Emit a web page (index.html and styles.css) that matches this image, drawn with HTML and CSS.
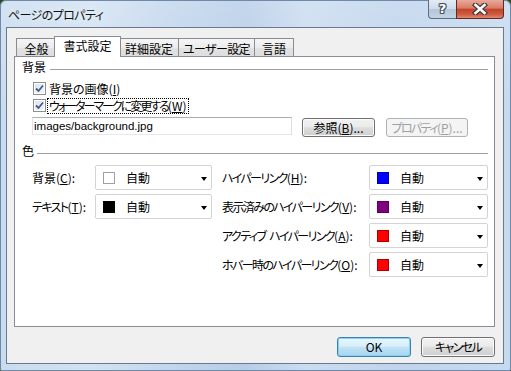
FILE: index.html
```html
<!DOCTYPE html>
<html lang="ja">
<head>
<meta charset="utf-8">
<title>ページのプロパティ</title>
<link rel="stylesheet" href="styles.css">
</head>
<body>
<div class="window">
  <div class="titlebar">
    <span class="title">ページのプロパティ</span>
    <div class="caption-btns">
      <div class="cap help"><span class="qmark">?</span></div>
      <div class="cap close">
        <svg width="16" height="12" viewBox="0 0 16 12"><path d="M3.5 2 L12.5 10 M12.5 2 L3.5 10" stroke="#3b3b3b" stroke-width="5" stroke-linecap="square"/><path d="M3.5 2 L12.5 10 M12.5 2 L3.5 10" stroke="#ffffff" stroke-width="2.6" stroke-linecap="square"/></svg>
      </div>
    </div>
  </div>
  <div class="client">
    <div class="tabs">
      <div class="tab t1">全般</div>
      <div class="tab active t2">書式設定</div>
      <div class="tab t3">詳細設定</div>
      <div class="tab t4 tight-tab">ユーザー設定</div>
      <div class="tab t5">言語</div>
    </div>
    <div class="panel">
      <div class="group-head"><span>背景</span><div class="rule"></div></div>
      <div class="check-row">
        <span class="checkbox"><svg width="9" height="9" viewBox="0 0 9 9"><path d="M1 4.5 L3.5 7 L8 1.5" fill="none" stroke="#3d5a99" stroke-width="1.8"/></svg></span>
        <span class="check-label">背景の画像(<u>I</u>)</span>
      </div>
      <div class="check-row">
        <span class="checkbox"><svg width="9" height="9" viewBox="0 0 9 9"><path d="M1 4.5 L3.5 7 L8 1.5" fill="none" stroke="#3d5a99" stroke-width="1.8"/></svg></span>
        <span class="check-label focus"><span class="tighter">ウォーターマークに変更する</span>(<u>W</u>)</span>
      </div>
      <div class="path-row">
        <div class="textbox">images/background.jpg</div>
        <div class="btn browse">参照(<u>B</u>)...</div>
        <div class="btn disabled props"><span class="tight">プロパティ</span>(<u>P</u>)...</div>
      </div>
      <div class="group-head second"><span>色</span><div class="rule"></div></div>
      <div class="color-grid">
        <span class="clabel">背景(<u>C</u>):</span>
        <div class="combo left"><span class="swatch white"></span><span class="ctext">自動</span><span class="arrow"></span></div>
        <span class="clabel rlabel"><span class="tight">ハイパーリンク</span>(<u>H</u>):</span>
        <div class="combo right"><span class="swatch" style="background:#0000ff"></span><span class="ctext">自動</span><span class="arrow"></span></div>

        <span class="clabel"><span class="tight">テキスト</span>(<u>T</u>):</span>
        <div class="combo left"><span class="swatch" style="background:#000000"></span><span class="ctext">自動</span><span class="arrow"></span></div>
        <span class="clabel rlabel"><span class="tight">表示済みのハイパーリンク</span>(<u>V</u>):</span>
        <div class="combo right"><span class="swatch" style="background:#800080"></span><span class="ctext">自動</span><span class="arrow"></span></div>

        <span class="clabel rlabel c3"><span class="tight">アクティブ</span><span class="sp"> </span><span class="tight">ハイパーリンク</span>(<u>A</u>):</span>
        <div class="combo right"><span class="swatch" style="background:#ff0000"></span><span class="ctext">自動</span><span class="arrow"></span></div>

        <span class="clabel rlabel c3"><span class="tight">ホバー時のハイパーリンク</span>(<u>O</u>):</span>
        <div class="combo right"><span class="swatch" style="background:#ff0000"></span><span class="ctext">自動</span><span class="arrow"></span></div>
      </div>
    </div>
    <div class="footer">
      <div class="btn default">OK</div>
      <div class="btn"><span class="tight">キャンセル</span></div>
    </div>
  </div>
</div>
</body>
</html>
```

FILE: styles.css
```css
html, body {
  margin: 0;
  height: 100%;
}
body {
  background: #2b4a1d;
  font-family: "Noto Sans CJK JP", "Noto Sans", sans-serif;
  font-size: 12px;
  line-height: 14px;
  color: #000;
  overflow: hidden;
  font-feature-settings: "palt";
}
u { text-decoration: underline; text-underline-offset: 1px; }
.tight { letter-spacing: -1.6px; }
.tighter { letter-spacing: -2px; }
.sp { display: inline-block; width: 4px; }

.window {
  width: 511px;
  height: 371px;
  box-sizing: border-box;
  padding: 0 7px 7px 6px;
  display: flex;
  flex-direction: column;
  border-radius: 6px 6px 2px 2px;
  background:
    linear-gradient(180deg, rgba(255,255,255,0.18) 0%, rgba(255,255,255,0) 30%),
    linear-gradient(90deg, #c9dcef 0%, #d3e2f2 18%, #c0d5ec 35%, #b7cde7 48%, #cadcf0 60%, #bfd4ec 78%, #c6daef 100%);
  box-shadow: inset 0 0 0 1px #6f8aa8;
}

.titlebar {
  height: 27px;
  display: flex;
  justify-content: space-between;
  align-items: flex-start;
  flex: none;
}
.title {
  padding-left: 2px;
  margin-top: 8px;
  font-size: 12px;
  color: #111;
  letter-spacing: -0.6px;
  text-shadow: 0 0 6px rgba(255,255,255,0.9);
}
.caption-btns {
  display: flex;
  height: 19px;
}
.cap {
  box-sizing: border-box;
  height: 19px;
  display: flex;
  align-items: center;
  justify-content: center;
}
.help {
  width: 28px;
  border: 1px solid #5c6e84;
  border-top: none;
  border-right: none;
  border-radius: 0 0 0 4px;
  background: linear-gradient(180deg, #e3ebf4 0%, #d0dcea 48%, #b5c6d9 52%, #c4d3e3 100%);
}
.qmark {
  font-family: "DejaVu Sans", sans-serif;
  font-weight: bold;
  font-size: 13px;
  line-height: 14px;
  color: #fff;
  text-shadow: 1px 0 #4a5260, -1px 0 #4a5260, 0 1px #4a5260, 0 -1px #4a5260, 1px 1px #4a5260, -1px -1px #4a5260, 1px -1px #4a5260, -1px 1px #4a5260;
}
.close {
  width: 48px;
  border: 1px solid #5e2c24;
  border-top: none;
  border-radius: 0 0 4px 0;
  background: linear-gradient(180deg, #e7a99c 0%, #d97b66 45%, #c4432b 52%, #cf5a40 80%, #dd8a72 100%);
}

.client {
  flex: 1;
  box-sizing: border-box;
  background: #f0f0f0;
  border: 1px solid #6a7a8c;
  display: flex;
  flex-direction: column;
  padding: 8px 8px 6px 7px;
}

.tabs {
  height: 20px;
  display: flex;
  align-items: flex-end;
  padding-left: 2px;
  position: relative;
  z-index: 1;
  flex: none;
}
.tab {
  box-sizing: border-box;
  height: 18px;
  border: 1px solid #898c95;
  border-bottom: none;
  background: linear-gradient(180deg, #f5f5f5 0%, #ececec 50%, #e2e2e2 51%, #dedede 100%);
  text-align: center;
  line-height: 17px;
  padding-top: 1px;
  white-space: nowrap;
}
.tab.tight-tab { letter-spacing: -0.6px; }
.tab.active {
  height: 21px;
  margin-bottom: -1px;
  background: #fff;
  padding-top: 0;
  line-height: 18px;
  position: relative;
  z-index: 2;
}
.t1 { width: 41px; }
.t2 { width: 67px; margin-left: -3px; margin-right: -2px; }
.t3 { width: 60px; }
.t4 { width: 77px; margin-left: -1px; }
.t5 { width: 40px; margin-left: -1px; }

.panel {
  flex: 1;
  background: #fff;
  border: 1px solid #898c95;
  padding: 3px 6px 0 7px;
}

.group-head {
  height: 14px;
  display: flex;
  align-items: center;
  gap: 4px;
}
.group-head .rule {
  flex: 1;
  height: 1px;
  background: #a0a0a0;
  margin-top: 4px;
}
.group-head.second {
  margin-top: 7px;
  gap: 3px;
}

.check-row {
  height: 17px;
  display: flex;
  align-items: center;
  margin-left: 11px;
}
.group-head + .check-row { margin-top: 6px; }
.checkbox {
  box-sizing: border-box;
  width: 13px;
  height: 13px;
  border: 1px solid #8e8f8f;
  background: linear-gradient(135deg, #dfe3e8 0%, #f6f6f6 100%);
  box-shadow: inset 0 0 0 1px #fff;
  display: flex;
  align-items: center;
  justify-content: center;
  margin-right: 1px;
}
.check-label {
  border: 1px dotted transparent;
  padding: 0 1px;
  line-height: 14px;
}
.check-label.focus {
  border-color: #000;
}

.path-row {
  display: flex;
  align-items: flex-start;
  margin-top: 3px;
  margin-left: 10px;
}
.textbox {
  box-sizing: border-box;
  width: 260px;
  height: 18px;
  border: 1px solid;
  border-color: #abadb3 #dbdfe6 #e3e9ef #e2e3ea;
  font-family: "Liberation Sans", sans-serif;
  font-size: 11.5px;
  line-height: 16px;
  padding-left: 1px;
}
.btn {
  box-sizing: border-box;
  height: 19px;
  border: 1px solid #707070;
  border-radius: 3px;
  background: linear-gradient(180deg, #f2f2f2 0%, #ebebeb 45%, #dddddd 52%, #cfcfcf 100%);
  box-shadow: inset 0 0 0 1px #fbfbfb;
  display: flex;
  align-items: center;
  justify-content: center;
  line-height: 14px;
  white-space: nowrap;
}
.browse {
  width: 73px;
  margin-left: 10px;
  margin-top: 1px;
}
.props {
  width: 82px;
  margin-left: 11px;
  margin-top: 1px;
}
.btn.disabled {
  border-color: #adb2b5;
  background: #f4f4f4;
  box-shadow: none;
  color: #a0a0a0;
}

.color-grid {
  margin-top: 7px;
  margin-left: 10px;
  display: grid;
  grid-template-columns: 63px 117px 157px 119px;
  grid-auto-rows: 25px;
  row-gap: 4px;
  align-items: center;
}
.clabel { white-space: nowrap; }
.rlabel { padding-left: 10px; }
.c3 { grid-column: 3; }
.combo {
  box-sizing: border-box;
  height: 25px;
  border: 1px solid #d4d4d4;
  border-radius: 2px;
  background: #fff;
  display: flex;
  align-items: center;
  padding-left: 7px;
  padding-right: 4px;
}
.swatch {
  box-sizing: border-box;
  width: 12px;
  height: 12px;
  border: 1px solid rgba(0,0,0,0.3);
  margin-top: 1px;
}
.swatch.white {
  background: #fff;
  border-color: #a0a0a0;
}
.ctext {
  margin-left: 11px;
}
.arrow {
  margin-left: auto;
  width: 0;
  height: 0;
  border-left: 3.5px solid transparent;
  border-right: 3.5px solid transparent;
  border-top: 4px solid #000;
  margin-top: 2px;
}

.footer {
  flex: none;
  margin-top: 10px;
  display: flex;
  justify-content: flex-end;
  gap: 10px;
}
.footer .btn {
  width: 74px;
  height: 20px;
}
.btn.default {
  border-color: #3c7fb1;
  background: linear-gradient(180deg, #e9f5fc 0%, #d8eefa 45%, #bfe2f6 52%, #a9d5ee 100%);
  box-shadow: inset 0 0 0 1px #84d3f3;
}
```
